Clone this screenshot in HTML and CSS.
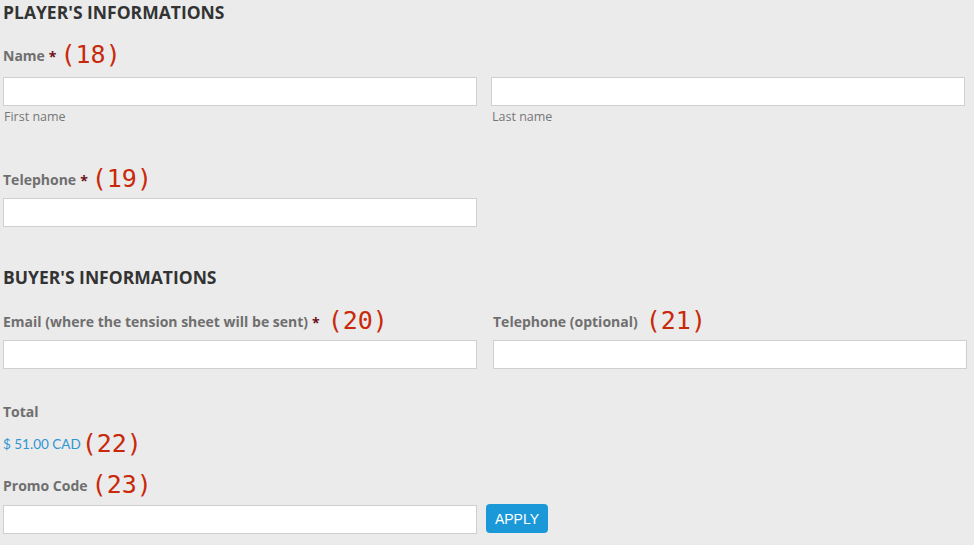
FILE: index.html
```
<!DOCTYPE html>
<html lang="en">
<head>
<meta charset="utf-8">
<title>Player's informations</title>
<link rel="stylesheet" href="styles.css">
</head>
<body>
<div class="form">
  <h2 class="section-title">PLAYER'S INFORMATIONS</h2>

  <div class="group group-name">
    <div class="label-row"><span class="label">Name</span><span class="req">*</span><span class="num">(18)</span></div>
    <div class="cols">
      <div class="col">
        <input class="field" type="text">
        <div class="sub">First name</div>
      </div>
      <div class="col">
        <input class="field" type="text">
        <div class="sub">Last name</div>
      </div>
    </div>
  </div>

  <div class="group group-tel">
    <div class="label-row"><span class="label">Telephone</span><span class="req">*</span><span class="num">(19)</span></div>
    <div class="cols">
      <div class="col"><input class="field" type="text"></div>
    </div>
  </div>

  <h2 class="section-title buyer">BUYER'S INFORMATIONS</h2>

  <div class="cols cols-wide group-email">
    <div class="col">
      <div class="label-row"><span class="label">Email (where the tension sheet will be sent)</span><span class="req">*</span><span class="num num-gap">(20)</span></div>
      <input class="field" type="text">
    </div>
    <div class="col">
      <div class="label-row"><span class="label">Telephone (optional)</span><span class="num num-gap">(21)</span></div>
      <input class="field" type="text">
    </div>
  </div>

  <div class="total-label label">Total</div>
  <div class="label-row price-row"><span class="price">$ 51.00 CAD</span><span class="num num-tight">(22)</span></div>

  <div class="group group-promo">
    <div class="label-row"><span class="label">Promo Code</span><span class="num">(23)</span></div>
    <div class="promo-line">
      <input class="field promo-field" type="text">
      <button class="apply" type="button">APPLY</button>
    </div>
  </div>
</div>
</body>
</html>
```
FILE: styles.css
```
* { box-sizing: border-box; }
html, body { margin: 0; padding: 0; }
body {
  background: #ebebeb;
  font-family: "Open Sans", "Noto Sans", sans-serif;
  width: 974px;
  height: 545px;
  overflow: hidden;
}
.form { padding-left: 3px; }
.section-title {
  margin: 0;
  font-size: 17.5px;
  line-height: 24px;
  font-weight: 700;
  color: #333;
  letter-spacing: 0;
}
.section-title.buyer { margin-top: 38px; }

.label-row {
  display: flex;
  align-items: center;
  height: 30px;
}
.label {
  font-size: 14px;
  font-weight: 700;
  color: #6f6f6f;
}
.req {
  color: #6b0f1a;
  font-size: 14px;
  font-weight: 700;
  margin-left: 4px;
  position: relative;
  top: 1px;
}
.num {
  font-family: "DejaVu Sans Mono", monospace;
  font-size: 25px;
  color: #c8290a;
  margin-left: 4px;
  line-height: 30px;
}
.num-gap { margin-left: 8px; }
.num-tight { margin-left: 1px; }

.cols {
  display: grid;
  grid-template-columns: 474px 474px;
  column-gap: 14px;
}
.cols-wide {
  grid-template-columns: 474px 474px;
  column-gap: 16px;
}
.col { display: flex; flex-direction: column; }

.field {
  display: block;
  width: 100%;
  height: 29px;
  margin: 4px 0 0;
  border: 1px solid #cfcfcf;
  background: #fff;
  padding: 0 6px;
  font: inherit;
  outline: none;
}
.sub {
  font-size: 12.5px;
  line-height: 18px;
  margin-top: 2px;
  margin-left: 1px;
  color: #777;
}

.group-name { margin-top: 16px; }
.group-name .field { margin-top: 7px; }
.group-tel { margin-top: 38px; }
.group-email { margin-top: 17px; }

.total-label {
  display: block;
  margin-top: 33px;
  line-height: 20px;
}
.price-row { margin-top: 7px; }
.price {
  font-family: Lato, sans-serif;
  font-size: 13.5px;
  color: #2f95d3;
}
.group-promo { margin-top: 11px; }
.promo-line {
  display: flex;
  align-items: flex-start;
  margin-top: 5px;
}
.promo-field { width: 474px; margin-top: 0; }
.apply {
  margin-left: 9px;
  margin-top: -1px;
  width: 62px;
  height: 29px;
  border: none;
  border-radius: 4px;
  background: #1b98d8;
  color: #fff;
  font-family: "Liberation Sans", Arial, sans-serif;
  font-size: 14px;
  padding: 0;
}
```
